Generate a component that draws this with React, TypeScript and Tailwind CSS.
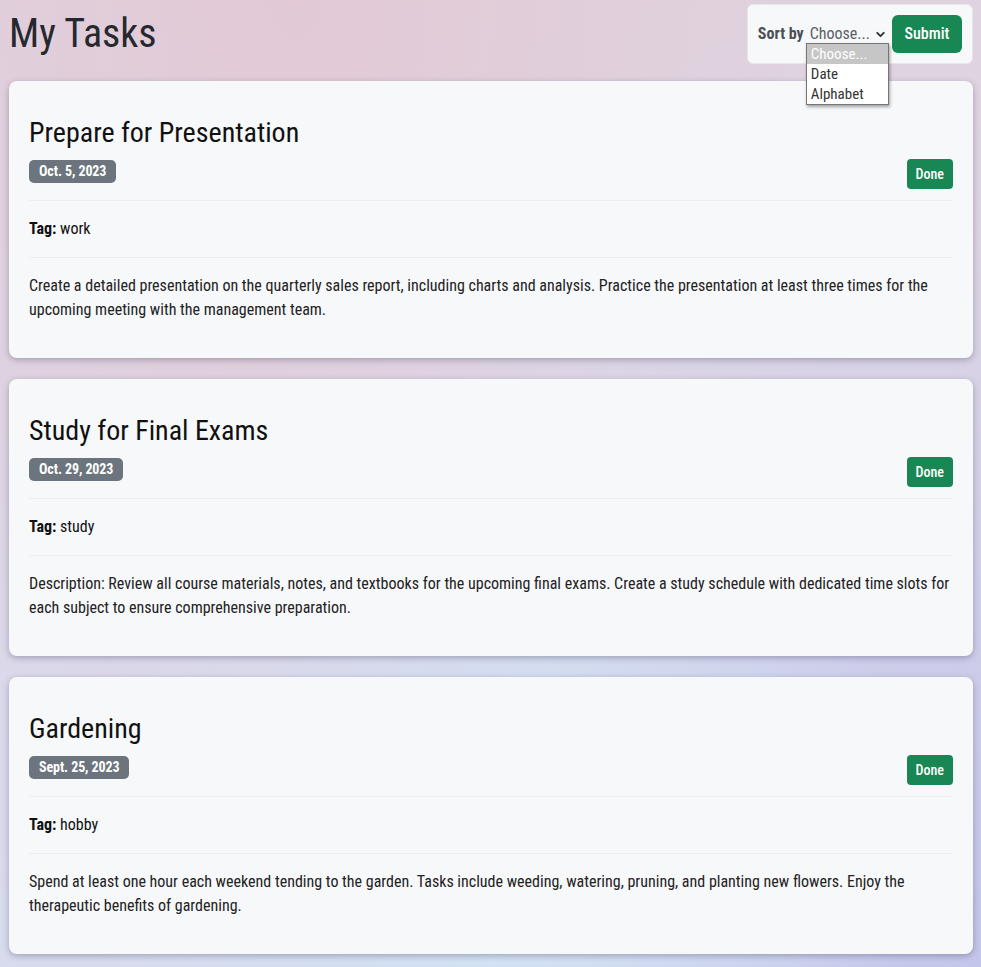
import { ChevronDown } from "lucide-react";

interface Task {
  title: string;
  date: string;
  tag: string;
  description: string;
}

const TASKS: Task[] = [
  {
    title: "Prepare for Presentation",
    date: "Oct. 5, 2023",
    tag: "work",
    description:
      "Create a detailed presentation on the quarterly sales report, including charts and analysis. Practice the presentation at least three times for the upcoming meeting with the management team.",
  },
  {
    title: "Study for Final Exams",
    date: "Oct. 29, 2023",
    tag: "study",
    description:
      "Description: Review all course materials, notes, and textbooks for the upcoming final exams. Create a study schedule with dedicated time slots for each subject to ensure comprehensive preparation.",
  },
  {
    title: "Gardening",
    date: "Sept. 25, 2023",
    tag: "hobby",
    description:
      "Spend at least one hour each weekend tending to the garden. Tasks include weeding, watering, pruning, and planting new flowers. Enjoy the therapeutic benefits of gardening.",
  },
];

const TaskCard = ({ task }: { task: Task }) => (
  <div className="rounded-lg bg-[#f7f8fa] pt-[35px] px-5 pb-9 shadow-[0_2px_6px_rgba(60,60,90,0.35)]">
    <h2 className="text-[28px] leading-[34px] text-[#111]">{task.title}</h2>
    <div className="mt-[9px] flex items-start justify-between">
      <span className="mt-px rounded-[5px] bg-[#6c757d] px-[10px] text-[14px] leading-[23px] font-bold tracking-[-0.1px] text-white">
        {task.date}
      </span>
      <button
        type="button"
        className="h-[30px] rounded-[4px] bg-[#198754] px-[9px] text-[14px] font-medium text-white"
      >
        Done
      </button>
    </div>
    <div className="mt-[11px] border-t border-[#edeef0] py-4 text-[16px] leading-6 text-[#111]">
      <span className="font-bold">Tag:</span> {task.tag}
    </div>
    <p className="border-t border-[#edeef0] pt-4 text-[16px] leading-6 text-[#222]">
      {task.description}
    </p>
  </div>
);

const App = () => {
  return (
    <div
      className="min-h-[967px] pl-[9px] pr-2 pt-1 pb-4 font-['Roboto',sans-serif] font-stretch-condensed bg-[radial-gradient(ellipse_at_30%_0%,#e3c9d6_0%,transparent_55%),radial-gradient(ellipse_at_50%_100%,#d3e2f4_0%,transparent_60%),radial-gradient(ellipse_at_100%_100%,#c3c5ea_0%,transparent_55%),linear-gradient(180deg,#dfd3df_0%,#dcd6e6_50%,#d8dbee_100%)]"
    >
      <div className="flex items-start justify-between">
        <h1 className="mt-[6px] text-[40px] leading-[48px] text-[#25292e]">My Tasks</h1>
        <div className="relative flex items-center rounded-md border border-[#e6e6ea] bg-[#f7f8fa] px-[10px] py-[10px]">
          <span className="text-[16px] font-bold text-[#4a4f55]">Sort by</span>
          <span className="ml-[6px] flex items-center gap-1 text-[16px] text-[#5a5f66]">
            Choose...
            <ChevronDown size={13} strokeWidth={3.5} className="text-[#333]" />
          </span>
          <button
            type="button"
            className="ml-[5px] h-[38px] w-[70px] rounded-md bg-[#198754] text-[16px] font-medium text-white"
          >
            Submit
          </button>
          <div className="absolute left-[58px] top-[38px] z-10 w-[83px] border border-[#767676] bg-white text-[15px] leading-[20px] text-[#333] shadow-[1px_2px_3px_rgba(0,0,0,0.35)]">
            <div className="bg-[#c6c6c6] pl-1 text-white">Choose...</div>
            <div className="pl-1">Date</div>
            <div className="pl-1">Alphabet</div>
          </div>
        </div>
      </div>
      <div className="mt-[17px] flex flex-col gap-[21px]">
        {TASKS.map((task) => (
          <TaskCard key={task.title} task={task} />
        ))}
      </div>
    </div>
  );
};

export default App;
